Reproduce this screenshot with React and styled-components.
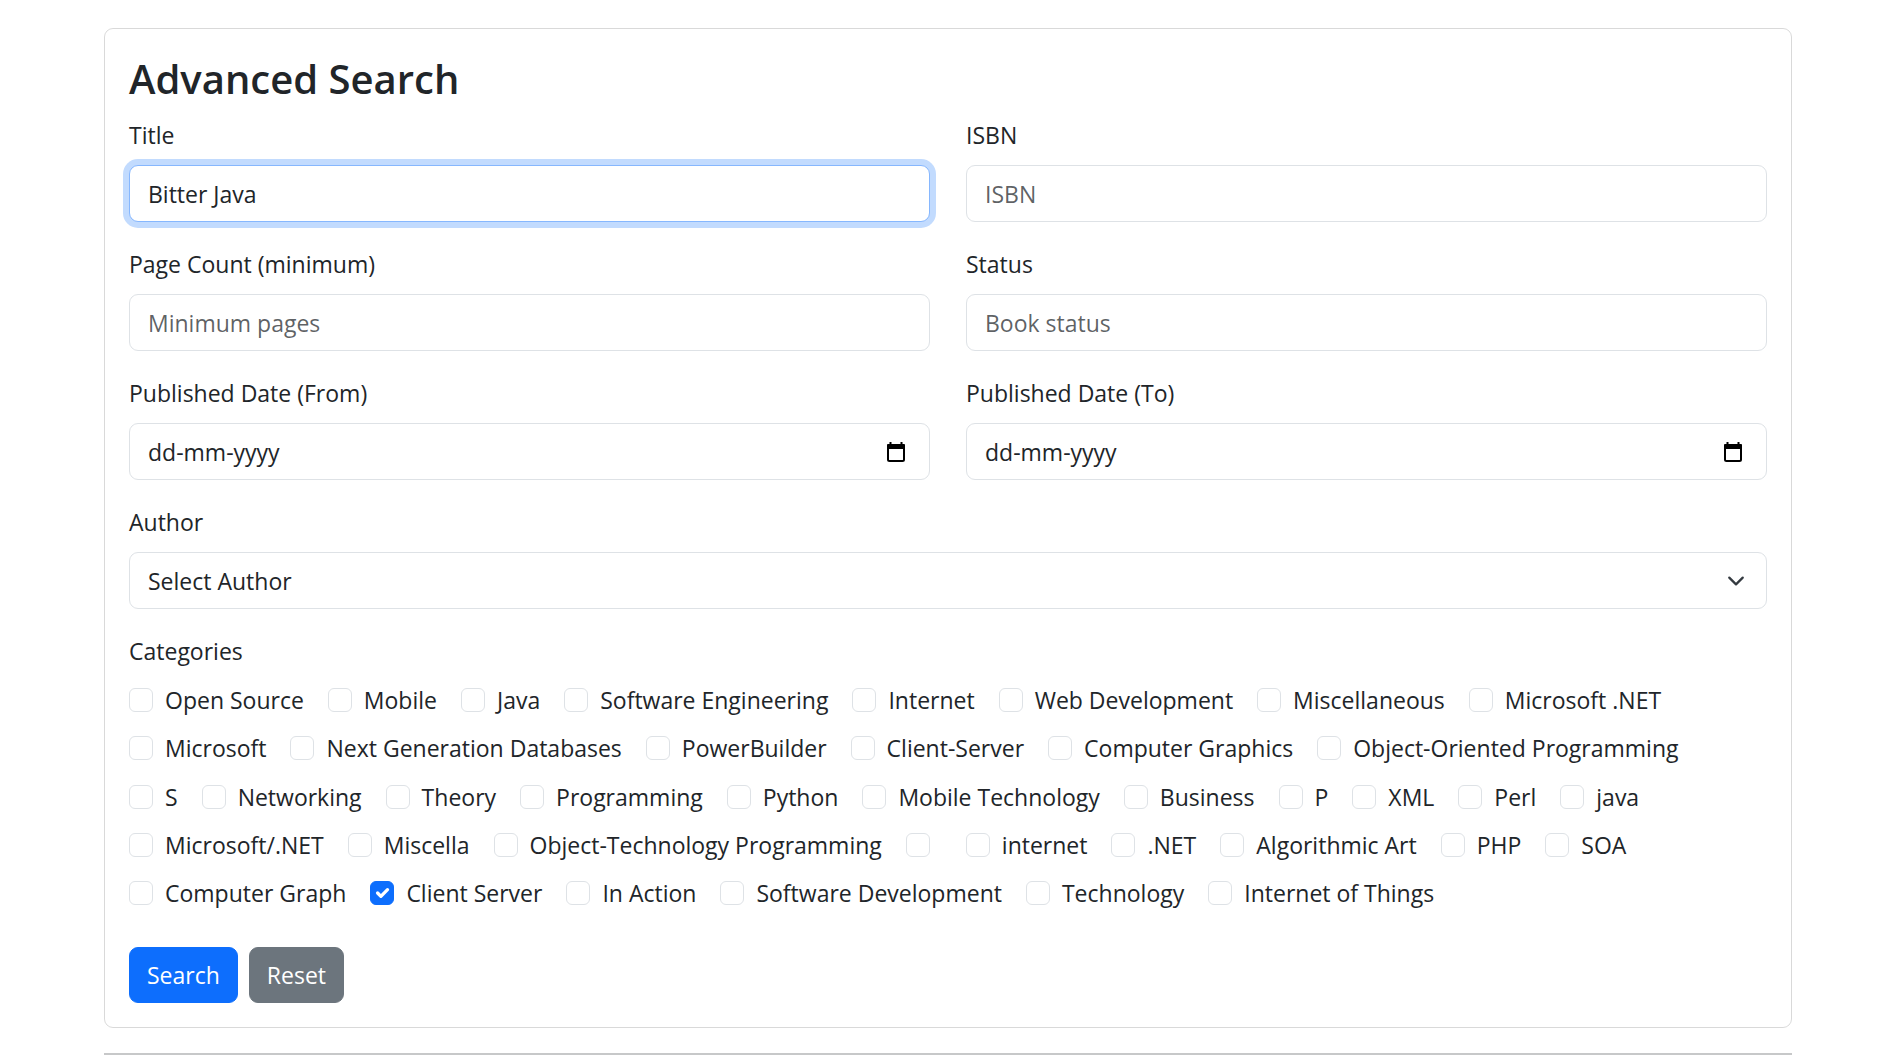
import React from "react";
import styled, { createGlobalStyle } from "styled-components";

const GlobalStyle = createGlobalStyle`
  body {
    margin: 0;
    background: #fff;
    color: #212529;
    font-family: "Open Sans", "Noto Sans", sans-serif;
  }
  * { box-sizing: border-box; }
`;

const categoryRows = [
  ["Open Source", "Mobile", "Java", "Software Engineering", "Internet", "Web Development", "Miscellaneous", "Microsoft .NET"],
  ["Microsoft", "Next Generation Databases", "PowerBuilder", "Client-Server", "Computer Graphics", "Object-Oriented Programming"],
  ["S", "Networking", "Theory", "Programming", "Python", "Mobile Technology", "Business", "P", "XML", "Perl", "java"],
  ["Microsoft/.NET", "Miscella", "Object-Technology Programming", "", "internet", ".NET", "Algorithmic Art", "PHP", "SOA"],
  ["Computer Graph", "Client Server", "In Action", "Software Development", "Technology", "Internet of Things"],
];

const checked = ["Client Server"];

const Page = styled.div`
  width: 1792px;
  padding: 28px 0 0 104px;
`;

const Card = styled.div`
  border: 1px solid rgba(0, 0, 0, 0.15);
  border-radius: 9px;
  padding: 24px;
`;

const Heading = styled.h3`
  margin: 0 0 12px;
  font-size: 40px;
  font-weight: 600;
  line-height: 52px;
  color: #212529;
`;

const FormGrid = styled.div`
  display: grid;
  grid-template-columns: 1fr 1fr;
  column-gap: 36px;
`;

const Field = styled.div`
  margin-bottom: 24px;
  grid-column: ${(p) => (p.$full ? "1 / -1" : "auto")};
`;

const Label = styled.div`
  font-size: 23px;
  line-height: 36px;
  margin-bottom: 12px;
`;

const TextInput = styled.input`
  display: block;
  width: 100%;
  height: 57px;
  padding: 0 18px;
  font-family: inherit;
  font-size: 23px;
  color: #212529;
  background: #fff;
  border: 1px solid ${(p) => (p.$focused ? "#86b7fe" : "#dee2e6")};
  border-radius: 9px;
  outline: none;
  box-shadow: ${(p) => (p.$focused ? "0 0 0 6px rgba(13, 110, 253, 0.25)" : "none")};
  &::placeholder {
    color: rgba(33, 37, 41, 0.72);
  }
`;

const FakeInput = styled.div`
  display: flex;
  align-items: center;
  justify-content: space-between;
  height: 57px;
  padding: 0 ${(p) => p.$padRight}px 0 18px;
  font-size: 23px;
  color: #212529;
  border: 1px solid #dee2e6;
  border-radius: 9px;
  background: #fff;
`;

const CategoryRows = styled.div`
  display: flex;
  flex-direction: column;
  gap: 12.25px;
  padding-top: 1px;
  margin-bottom: 36px;
`;

const CategoryRow = styled.div`
  display: flex;
  align-items: center;
  height: 36px;
`;

const Check = styled.label`
  display: flex;
  align-items: center;
  margin-right: 24px;
  font-size: 23px;
  line-height: 36px;
  white-space: nowrap;
`;

const Box = styled.span`
  width: 24px;
  height: 24px;
  margin-right: 12px;
  flex: none;
  display: flex;
  align-items: center;
  justify-content: center;
  border-radius: 6px;
  border: 1px solid ${(p) => (p.$checked ? "#0d6efd" : "#dee2e6")};
  background: ${(p) => (p.$checked ? "#0d6efd" : "#fff")};
`;

const ButtonBar = styled.div`
  display: flex;
  gap: 11px;
`;

const Button = styled.button`
  height: 56px;
  padding: 0 17px;
  font-family: inherit;
  font-size: 23px;
  line-height: 36px;
  color: #fff;
  border: 1px solid ${(p) => (p.$variant === "secondary" ? "#6c757d" : "#0d6efd")};
  background: ${(p) => (p.$variant === "secondary" ? "#6c757d" : "#0d6efd")};
  border-radius: 9px;
  cursor: pointer;
`;

const Divider = styled.hr`
  margin: 25px 0 0;
  border: 0;
  border-top: 2px solid rgba(33, 37, 41, 0.25);
`;

const CalendarIcon = () => (
  <svg width="18" height="20" viewBox="0 0 18 20">
    <rect x="2.5" y="0" width="2" height="4" fill="#000" />
    <rect x="13.5" y="0" width="2" height="4" fill="#000" />
    <rect x="0" y="2" width="18" height="5" rx="1" fill="#000" />
    <rect x="1" y="3" width="16" height="16" rx="1.5" fill="none" stroke="#000" strokeWidth="2" />
  </svg>
);

const Chevron = () => (
  <svg width="18" height="18" viewBox="0 0 16 16">
    <path d="m2 5 6 6 6-6" fill="none" stroke="#343a40" strokeWidth="2" strokeLinecap="round" strokeLinejoin="round" />
  </svg>
);

const CheckMark = () => (
  <svg width="22" height="22" viewBox="0 0 20 20">
    <path d="m6 10 3 3 6-6" fill="none" stroke="#fff" strokeWidth="3" strokeLinecap="round" strokeLinejoin="round" />
  </svg>
);

const DateField = () => (
  <FakeInput $padRight={24}>
    <span>dd-mm-yyyy</span>
    <CalendarIcon />
  </FakeInput>
);

export default function App() {
  return (
    <>
      <GlobalStyle />
      <Page>
        <Card>
          <Heading>Advanced Search</Heading>
          <FormGrid>
            <Field>
              <Label>Title</Label>
              <TextInput $focused defaultValue="Bitter Java" />
            </Field>
            <Field>
              <Label>ISBN</Label>
              <TextInput placeholder="ISBN" />
            </Field>
            <Field>
              <Label>Page Count (minimum)</Label>
              <TextInput placeholder="Minimum pages" />
            </Field>
            <Field>
              <Label>Status</Label>
              <TextInput placeholder="Book status" />
            </Field>
            <Field>
              <Label>Published Date (From)</Label>
              <DateField />
            </Field>
            <Field>
              <Label>Published Date (To)</Label>
              <DateField />
            </Field>
            <Field $full>
              <Label>Author</Label>
              <FakeInput $padRight={21}>
                <span>Select Author</span>
                <Chevron />
              </FakeInput>
            </Field>
          </FormGrid>
          <Label>Categories</Label>
          <CategoryRows>
            {categoryRows.map((row, i) => (
              <CategoryRow key={i}>
                {row.map((name, j) => {
                  const on = checked.includes(name);
                  return (
                    <Check key={j}>
                      <Box $checked={on}>{on && <CheckMark />}</Box>
                      {name}
                    </Check>
                  );
                })}
              </CategoryRow>
            ))}
          </CategoryRows>
          <ButtonBar>
            <Button>Search</Button>
            <Button $variant="secondary">Reset</Button>
          </ButtonBar>
        </Card>
        <Divider />
      </Page>
    </>
  );
}
